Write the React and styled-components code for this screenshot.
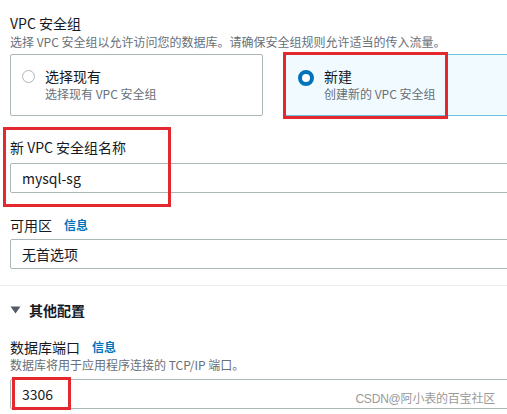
import styled, { createGlobalStyle } from "styled-components";

const Global = createGlobalStyle`
  html, body { margin: 0; padding: 0; background: #fff; }
  body {
    font-family: "Noto Sans CJK SC", "Noto Sans", sans-serif;
    color: #16191f;
    overflow: hidden;
  }
`;

const Page = styled.div`
  position: relative;
  width: 507px;
  height: 414px;
  overflow: hidden;
`;

const Section = styled.div`
  width: 560px;
  padding: 0 0 0 10px;
  box-sizing: border-box;
`;

const Title = styled.div`
  font-size: 14px;
  line-height: 20px;
  height: 20px;
  padding-top: ${(p) => p.$top || 0}px;
  display: flex;
  align-items: center;
  gap: 12px;
`;

const Desc = styled.div`
  font-size: 12px;
  line-height: 16px;
  height: 16px;
  margin-top: ${(p) => p.$mt || 0}px;
  color: #687078;
`;

const Info = styled.span`
  color: #0073bb;
  font-size: 12px;
  font-weight: 700;
`;

const Tiles = styled.div`
  display: grid;
  grid-template-columns: 253px 253px;
  gap: 22px;
  margin-top: 4px;
`;

const Tile = styled.div`
  position: relative;
  height: 62px;
  box-sizing: border-box;
  border: 1px solid ${(p) => (p.$on ? "#6cc1de" : "#aab7b8")};
  border-radius: 2px;
  background: ${(p) => (p.$on ? "#f1faff" : "#fff")};
  display: flex;
  align-items: flex-start;
  gap: 10px;
  padding: 12px ${(p) => (p.$on ? 12 : 11)}px;
`;

const Radio = styled.span`
  flex: none;
  width: ${(p) => (p.$on ? 8 : 11)}px;
  height: ${(p) => (p.$on ? 8 : 11)}px;
  margin-top: 3px;
  border-radius: 50%;
  border: ${(p) => (p.$on ? "4px solid #0073bb" : "1.5px solid #aab7b8")};
  background: #fff;
`;

const TileText = styled.div`
  display: flex;
  flex-direction: column;
  font-size: 14px;
  line-height: 18px;
  & > span:last-child {
    font-size: 12px;
    line-height: 17px;
    color: #687078;
  }
`;

const Input = styled.div`
  box-sizing: border-box;
  height: 30px;
  border: 1px solid #aab7b8;
  border-radius: 2px;
  margin-top: ${(p) => p.$mt || 0}px;
  padding: 0 11px;
  display: flex;
  align-items: center;
  font-size: 14px;
  color: #16191f;
`;

const Divider = styled.div`
  height: 1px;
  background: #eaeded;
  margin-top: 16px;
`;

const Expander = styled.div`
  display: flex;
  align-items: center;
  gap: 8px;
  height: 20px;
  padding-top: 14px;
  font-size: 14px;
  font-weight: 700;
  color: #16191f;
  & > svg { flex: none; }
`;

const Mark = styled.div`
  position: absolute;
  border: 3px solid #e3292e;
  box-sizing: border-box;
  left: ${(p) => p.$x}px;
  top: ${(p) => p.$y}px;
  width: ${(p) => p.$w}px;
  height: ${(p) => p.$h}px;
  pointer-events: none;
`;

const Watermark = styled.div`
  position: absolute;
  right: 12px;
  top: 389px;
  font-family: "Liberation Sans", "Noto Sans CJK SC", sans-serif;
  font-size: 12px;
  color: #9a9a9a;
  letter-spacing: -0.2px;
`;

export default function App() {
  return (
    <Page>
      <Global />
      <Section>
        <Title $top={13}>VPC 安全组</Title>
        <Desc $mt={1}>选择 VPC 安全组以允许访问您的数据库。请确保安全组规则允许适当的传入流量。</Desc>
        <Tiles>
          <Tile>
            <Radio />
            <TileText>
              <span>选择现有</span>
              <span>选择现有 VPC 安全组</span>
            </TileText>
          </Tile>
          <Tile $on>
            <Radio $on />
            <TileText>
              <span>新建</span>
              <span>创建新的 VPC 安全组</span>
            </TileText>
          </Tile>
        </Tiles>

        <Title $top={21}>新 VPC 安全组名称</Title>
        <Input $mt={6}>mysql-sg</Input>

        <Title $top={22}>
          可用区 <Info>信息</Info>
        </Title>
        <Input $mt={4}>无首选项</Input>
      </Section>
      <Divider />
      <Section>
        <Expander>
          <svg width="11" height="8" viewBox="0 0 11 8">
            <path d="M0.5 0.5 H10.5 L5.5 7.5 Z" fill="#545b64" />
          </svg>
          其他配置
        </Expander>
        <Title $top={17}>
          数据库端口 <Info>信息</Info>
        </Title>
        <Desc>数据库将用于应用程序连接的 TCP/IP 端口。</Desc>
        <Input $mt={6}>3306</Input>
      </Section>
      <Mark $x={283} $y={52} $w={165} $h={67} />
      <Mark $x={3} $y={127} $w={168} $h={80} />
      <Mark $x={12} $y={377} $w={59} $h={33} />
      <Watermark>CSDN@阿小表的百宝社区</Watermark>
    </Page>
  );
}
